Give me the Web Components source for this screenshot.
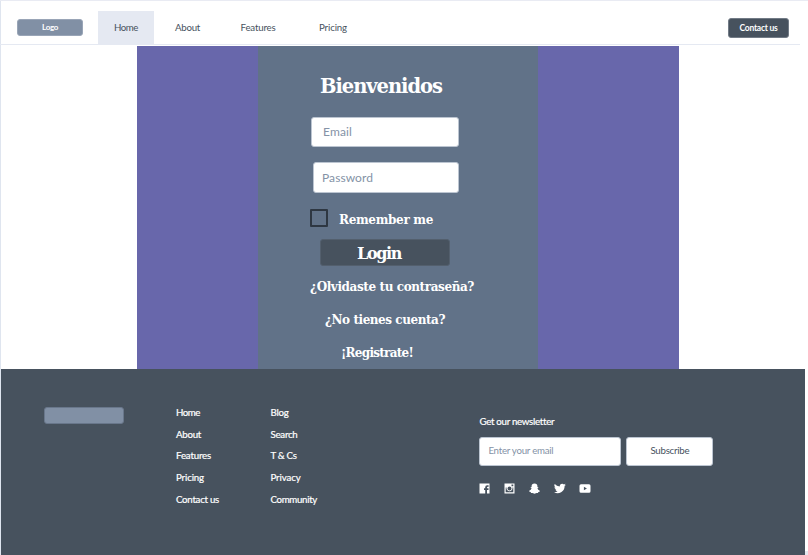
<!DOCTYPE html>
<html lang="es"><head><meta charset="utf-8"><title>Bienvenidos</title>
<style>
html,body{margin:0;height:555px;overflow:hidden;background:#fff}
body{font-family:Lato,"Open Sans",sans-serif;font-size:9.7px;color:#47525e}
</style></head><body>
<login-page></login-page>
<script>
const define=(name,html,init)=>customElements.define(name,class extends HTMLElement{
  constructor(){super();this.attachShadow({mode:'open'}).innerHTML=html;}
  connectedCallback(){if(init)init(this);}
});

/* A single line of text tracked to occupy the width given in "w". */
define('text-line',`<style>
:host{display:block;white-space:nowrap;flex:none;line-height:1.2}
span{display:inline-block}
</style><span><slot></slot></span>`,el=>{
  const w=+el.getAttribute('w'),s=el.shadowRoot.querySelector('span');
  el.style.width=w+'px';
  s.style.letterSpacing=(w-s.getBoundingClientRect().width)/el.textContent.length+'px';
});

define('pill-box',`<style>
:host{display:flex;align-items:center;justify-content:center;box-sizing:border-box;flex:none;border-radius:3px;border:1px solid transparent}
</style><slot></slot>`);

define('nav-bar',`<style>
:host{display:flex;box-sizing:border-box;width:800px;height:45px;border-bottom:1px solid #e5e9f2;padding:11px 11px 0 17px}
.logo{width:66px;height:17px;margin-top:8px;background:#8190a5;border-color:#99a5b7;color:#fff;font-size:8px;font-weight:700}
nav{display:flex;margin-left:15px;height:33px}
.tab{box-sizing:border-box;padding:11px 0 0 16px;width:56px;background:#e5e9f2}
nav text-line{margin-top:11px}.tab text-line{margin-top:0}
.contact{width:61px;height:20px;margin:7px 0 0 auto;background:#47525e;border-color:#727b86;color:#fff;font-size:8.5px;font-weight:700}
</style>
<pill-box class="logo"><text-line w="16">Logo</text-line></pill-box>
<nav><div class="tab"><text-line w="24">Home</text-line></div>
<text-line w="25" style="margin-left:21px">About</text-line>
<text-line w="35" style="margin-left:40.5px">Features</text-line>
<text-line w="28" style="margin-left:43.5px">Pricing</text-line></nav>
<pill-box class="contact"><text-line w="38">Contact us</text-line></pill-box>`);

define('field-box',`<style>
:host{display:flex;align-items:center;box-sizing:border-box;flex:none;background:#fff;border:1px solid #bcc5d1;border-radius:3px;color:#8492a6}
</style><slot></slot>`);

define('login-form',`<style>
:host{display:flex;flex-direction:column;box-sizing:border-box;width:280px;height:323px;background:#617288;padding-left:52px;color:#fff;font-family:"DejaVu Serif",serif;font-weight:700;font-size:12px}
field-box{font-family:Lato,sans-serif;font-weight:400;font-size:12px;height:30px}
.title{font-size:19.5px;margin:29px 0 0 10px;height:23px}
.row{display:flex;align-items:center;height:19px;margin-top:15px}
.row text-line{padding-top:5px}
i{box-sizing:border-box;width:18px;height:18px;border:2px solid #2e3742;border-radius:1px;margin-right:11px}
.login{width:130px;height:27px;margin:12px 0 0 10px;background:#47525e;border-color:#535f6d;justify-content:flex-start;font-size:16px;padding-left:36px}
.login text-line{padding-top:2px}
.link{height:15px}
</style>
<text-line class="title" w="122">Bienvenidos</text-line>
<field-box style="width:148px;margin:19px 0 0 1px;padding-left:11px"><text-line w="29">Email</text-line></field-box>
<field-box style="width:146px;height:31px;margin:15px 0 0 3px;padding-left:8px"><text-line w="51" style="padding-top:2px">Password</text-line></field-box>
<div class="row"><i></i><text-line w="94">Remember me</text-line></div>
<pill-box class="login"><text-line w="44">Login</text-line></pill-box>
<text-line class="link" w="164" style="margin:14px 0 0 0">¿Olvidaste tu contraseña?</text-line>
<text-line class="link" w="120" style="margin:18px 0 0 15px">¿No tienes cuenta?</text-line>
<text-line class="link" w="72" style="margin:18px 0 0 31px">¡Registrate!</text-line>`);

define('login-stage',`<style>
:host{display:flex;box-sizing:border-box;padding-left:121px;width:542px;height:323px;margin:1px 0 0 137px;background:#6867ab}
</style><login-form></login-form>`);

define('link-list',`<style>
:host{display:flex;flex-direction:column;gap:9.75px;flex:none;margin-top:37.9px;-webkit-text-stroke:.2px currentColor}
::slotted(*){height:12px}
</style><slot></slot>`);

define('social-row',`<style>
:host{display:flex;align-items:center;margin-top:17px;gap:14px}
svg{display:block;fill:#fff}
</style>
<svg width="11" height="11" viewBox="0 0 11 11"><path d="M.5.5h10v10H8V7h1.500V5.300H8V4.500q0-.7.8-.7h.8V2.200H8.200Q6.200 2.200 6.200 4.200v1.100H5V7h1.200v3.500H.5z"/></svg>
<svg width="11" height="11" viewBox="0 0 11 11"><path fill-rule="evenodd" d="M.5.5h10v10H.5zM1.700 4.500v4.800h7.600V4.500H8.400A3 3 0 1 1 2.600 4.500zM7.500 1.500v1.800h1.800V1.500zM5.500 3.500a2 2 0 1 0 0 4 2 2 0 0 0 0-4z"/></svg>
<svg width="11" height="11" viewBox="0 0 11 11"><path d="M5.500.4Q8.400.4 8.400 3v1.200l.8-.1.1.7-.9.5Q8.900 7 10.800 7.800l-.2 1-1.300.3-.3 1-1.400-.1-2.100.7-2.100-.7-1.400.1-.3-1L.4 8.800l-.2-1Q2.100 7 2.600 5.300l-.9-.5.1-.7.8.1V3Q2.600.4 5.500.4z"/></svg>
<svg width="12" height="11" viewBox="0 0 24 20"><path d="M23.600 2.500a9 9 0 0 1-2.800.8A5 5 0 0 0 23 .6a10 10 0 0 1-3.100 1.200A4.900 4.900 0 0 0 11.600 6 14 14 0 0 1 1.500 1 4.900 4.900 0 0 0 3 7.500a5 5 0 0 1-2.200-.6 4.900 4.900 0 0 0 3.900 4.900 5 5 0 0 1-2.200.1 4.900 4.900 0 0 0 4.600 3.400A10 10 0 0 1 0 17.300 14 14 0 0 0 21.200 5a10 10 0 0 0 2.400-2.500z"/></svg>
<svg width="12" height="11" viewBox="0 0 12 11" style="margin-left:-1.500px"><path fill-rule="evenodd" d="M2 1.200h8Q11.500 1.200 11.500 2.700v5.600q0 1.500-1.500 1.500H2q-1.500 0-1.500-1.500V2.700q0-1.500 1.500-1.500zM4.900 3.700v3.600l3-1.800z"/></svg>`);

define('page-footer',`<style>
:host{display:flex;box-sizing:border-box;width:804px;height:186px;margin-left:1px;background:#47525e;color:#fff}
.brand{width:80px;height:17px;margin:38px 0 0 43px;background:#8190a5;border-color:#69778b}
.news{margin:47px 0 0 162.400px}
.head{-webkit-text-stroke:.2px currentColor}
.sub{display:flex;gap:5px;margin-top:9px}
.sub pill-box{width:87px;height:29px;background:#fff;border-color:#bcc5d1;color:#47525e}
field-box{width:142px;height:29px;padding-left:8px}
</style>
<pill-box class="brand"></pill-box>
<link-list style="margin-left:52px"><text-line w="24">Home</text-line><text-line w="25">About</text-line><text-line w="35">Features</text-line><text-line w="28">Pricing</text-line><text-line w="43">Contact us</text-line></link-list>
<link-list style="margin-left:51.500px"><text-line w="18">Blog</text-line><text-line w="27">Search</text-line><text-line w="26">T &amp; Cs</text-line><text-line w="30">Privacy</text-line><text-line w="46.500">Community</text-line></link-list>
<div class="news"><text-line class="head" w="74.500">Get our newsletter</text-line>
<div class="sub"><field-box><text-line w="65">Enter your email</text-line></field-box><pill-box><text-line w="39">Subscribe</text-line></pill-box></div>
<social-row></social-row></div>`);

define('login-page',`<style>
:host{display:block;box-sizing:border-box;width:808px;height:555px;background:linear-gradient(#e9ebf3,#e9ebf3) 0 0/808px 1px no-repeat,linear-gradient(#dfe5ef,#dfe5ef) 0 0/1px 555px no-repeat,linear-gradient(#e5e7ee,#e5e7ee) 805px 551px/3px 4px no-repeat,#fff}
</style><nav-bar></nav-bar><login-stage></login-stage><page-footer></page-footer>`);
</script></body></html>
